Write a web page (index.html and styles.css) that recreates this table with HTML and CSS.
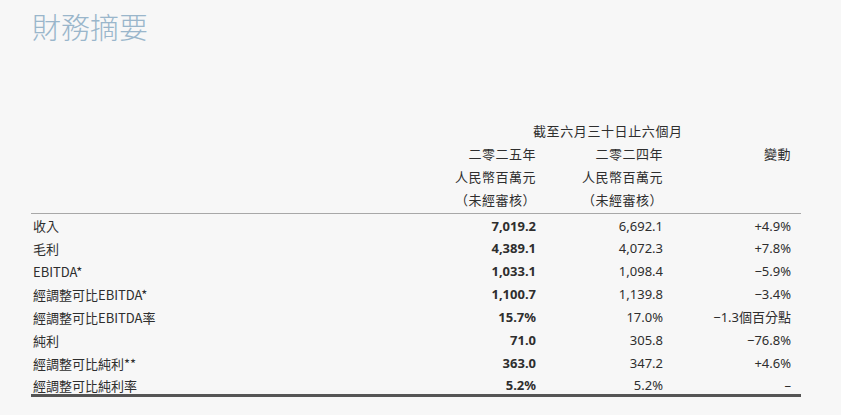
FILE: index.html
```html
<!DOCTYPE html>
<html lang="zh-Hant">
<head>
<meta charset="utf-8">
<link rel="stylesheet" href="styles.css">
</head>
<body>
<div class="page">
  <h1 class="title">財務摘要</h1>
  <table class="fin">
    <colgroup>
      <col class="c-label">
      <col class="c-num">
      <col class="c-num">
      <col class="c-chg">
    </colgroup>
    <thead>
      <tr><th></th><th colspan="3" class="period">截至六月三十日止六個月</th></tr>
      <tr><th></th><th class="num">二零二五年</th><th class="num">二零二四年</th><th class="num chg">變動</th></tr>
      <tr><th></th><th class="num">人民幣百萬元</th><th class="num">人民幣百萬元</th><th></th></tr>
      <tr class="last-head"><th></th><th class="num">（未經審核）</th><th class="num">（未經審核）</th><th></th></tr>
    </thead>
    <tbody>
      <tr class="first"><td>收入</td><td class="num b">7,019.2</td><td class="num">6,692.1</td><td class="num chg">+4.9%</td></tr>
      <tr><td>毛利</td><td class="num b">4,389.1</td><td class="num">4,072.3</td><td class="num chg">+7.8%</td></tr>
      <tr><td>EBITDA*</td><td class="num b">1,033.1</td><td class="num">1,098.4</td><td class="num chg">−5.9%</td></tr>
      <tr><td>經調整可比EBITDA*</td><td class="num b">1,100.7</td><td class="num">1,139.8</td><td class="num chg">−3.4%</td></tr>
      <tr><td>經調整可比EBITDA率</td><td class="num b">15.7%</td><td class="num">17.0%</td><td class="num chg">−1.3個百分點</td></tr>
      <tr><td>純利</td><td class="num b">71.0</td><td class="num">305.8</td><td class="num chg">−76.8%</td></tr>
      <tr><td>經調整可比純利**</td><td class="num b">363.0</td><td class="num">347.2</td><td class="num chg">+4.6%</td></tr>
      <tr class="last"><td>經調整可比純利率</td><td class="num b">5.2%</td><td class="num">5.2%</td><td class="num chg">–</td></tr>
    </tbody>
  </table>
</div>
</body>
</html>
```
FILE: styles.css
```css
html, body {
  margin: 0;
  padding: 0;
  background: #f7f7f7;
}
.page {
  padding: 8px 40px 0 31px;
  font-family: "Noto Sans", "Noto Sans CJK TC", sans-serif;
  color: #2e2e2e;
}
.title {
  margin: 0 0 0 1px;
  font-family: "Noto Sans CJK TC", sans-serif;
  font-weight: 300;
  font-size: 29px;
  line-height: 36px;
  height: 36px;
  color: #9ab6cb;
}
.fin {
  margin-top: 75px;
  width: 770px;
  border-collapse: collapse;
  font-size: 13px;
}
.c-label { width: 378px; }
.c-num { width: 127px; }
.c-chg { width: 138px; }
.fin th, .fin td {
  padding: 0;
  height: 23px;
  line-height: 23px;
  font-weight: normal;
  text-align: left;
  white-space: nowrap;
  vertical-align: top;
  box-sizing: border-box;
}
.fin td:first-child {
  padding-left: 2px;
  font-family: "Noto Sans CJK TC", "Noto Sans", sans-serif;
}
.fin .num { text-align: right; }
.fin .chg { padding-right: 10px; }
.fin .b { font-weight: bold; }
.fin thead th { font-family: "Noto Sans CJK TC", sans-serif; }
.fin thead th.num { letter-spacing: 0.5px; }
.fin th.period {
  text-align: left;
  padding-left: 124px;
  letter-spacing: 0.6px;
}
.last-head th {
  height: 25px;
  border-bottom: 1px solid #a8a8a8;
}
.first td {
  height: 23px;
  line-height: 22px;
  padding-top: 1px;
}
.fin .last td {
  height: 19px;
  line-height: 17px;
  padding-top: 2px;
  border-bottom: 3px solid #555;
}
```
